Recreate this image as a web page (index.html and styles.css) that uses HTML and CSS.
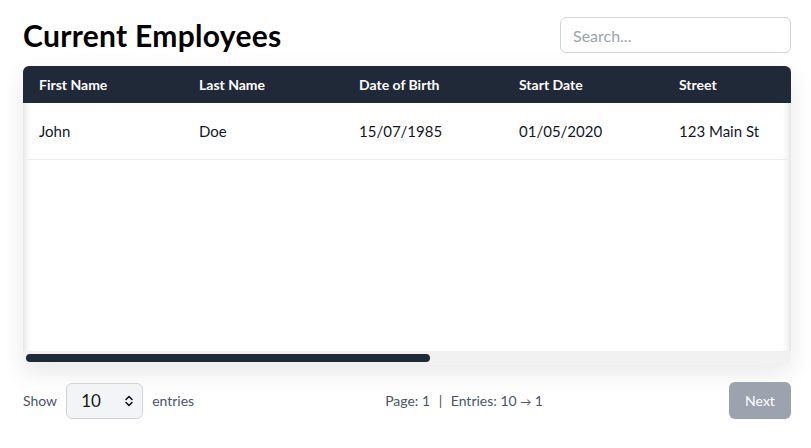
FILE: index.html
```html
<!DOCTYPE html>
<html lang="en">
<head>
<meta charset="utf-8">
<title>Current Employees</title>
<link rel="stylesheet" href="styles.css">
</head>
<body>
<main class="page">
  <header class="top">
    <h1 class="title">Current Employees</h1>
    <input class="search" type="text" placeholder="Search...">
  </header>
  <section class="card">
    <div class="scroller">
      <div class="thead">
        <div class="cell">First Name</div>
        <div class="cell">Last Name</div>
        <div class="cell">Date of Birth</div>
        <div class="cell">Start Date</div>
        <div class="cell">Street</div>
      </div>
      <div class="tbody">
        <div class="row">
          <div class="cell">John</div>
          <div class="cell">Doe</div>
          <div class="cell">15/07/1985</div>
          <div class="cell">01/05/2020</div>
          <div class="cell">123 Main St</div>
        </div>
      </div>
    </div>
    <div class="track"><div class="thumb"></div></div>
  </section>
  <footer class="bottom">
    <div class="show">
      <span>Show</span>
      <div class="select">
        <span class="select-value">10</span>
        <svg class="chev" width="10" height="14" viewBox="0 0 10 14" aria-hidden="true"><path d="M2 5.5 L5 2.5 L8 5.5 M2 8.5 L5 11.5 L8 8.5" fill="none" stroke="#111827" stroke-width="1.6" stroke-linecap="round" stroke-linejoin="round"/></svg>
      </div>
      <span>entries</span>
    </div>
    <div class="info">Page: 1 <span class="sep">|</span> Entries: 10 <span class="arrow">→</span> 1</div>
    <button class="next" type="button">Next</button>
  </footer>
</main>
</body>
</html>
```

FILE: styles.css
```css
* { box-sizing: border-box; }
html, body { margin: 0; background: #ffffff; }
body {
  font-family: Lato, "Noto Sans", sans-serif;
  color: #111827;
  overflow: hidden;
}
.page {
  padding: 17px 20px 0 23px;
  width: 811px;
}
.top {
  display: flex;
  align-items: center;
  justify-content: space-between;
  height: 36px;
  margin-bottom: 13px;
}
.title {
  margin: 0;
  font-size: 30px;
  font-weight: 700;
  letter-spacing: 0.3px;
  line-height: 36px;
  color: #000;
}
.search {
  width: 231px;
  height: 36px;
  border: 1px solid #d1d5db;
  border-radius: 6px;
  padding: 0 12px;
  font-family: inherit;
  font-size: 16px;
  color: #111827;
  outline: none;
}
.search::placeholder { color: #9ca3af; }
.card {
  width: 768px;
  border-radius: 6px;
  overflow: hidden;
  box-shadow: 0 8px 24px rgba(0, 0, 0, 0.09);
  background: #fff;
}
.scroller {
  overflow: hidden;
  height: 285px;
  display: flex;
  flex-direction: column;
}
.thead, .row {
  display: flex;
  width: 768px;
}
.thead {
  background: #1f2937;
  color: #fff;
  height: 37px;
  align-items: center;
  font-size: 14px;
  font-weight: 700;
}
.cell {
  width: 160px;
  flex: none;
  padding-left: 16px;
  white-space: nowrap;
}
.cell:last-child { width: 128px; }
.tbody {
  flex: 1;
  box-shadow: inset 9px 0 8px -8px rgba(0, 0, 0, 0.16), inset -9px 0 8px -8px rgba(0, 0, 0, 0.16);
}
.row {
  height: 57px;
  align-items: center;
  font-size: 15px;
  border-bottom: 1px solid #eeeeee;
}
.track {
  height: 14px;
  background: #f1f1f1;
  padding: 3px 361px 3px 3px;
  border-radius: 0 0 6px 6px;
}
.thumb {
  height: 8px;
  background: #1f2937;
  border-radius: 4px;
}
.bottom {
  display: flex;
  align-items: center;
  justify-content: space-between;
  width: 768px;
  margin-top: 17px;
  height: 37px;
  font-size: 14px;
  color: #4b5563;
}
.show {
  display: flex;
  align-items: center;
  gap: 9px;
}
.select {
  width: 77px;
  height: 36px;
  background: #f3f4f6;
  border: 1px solid #d1d5db;
  border-radius: 6px;
  display: flex;
  align-items: center;
  justify-content: space-between;
  padding: 0 8px 0 14px;
  color: #111827;
  font-size: 17px;
}
.chev { display: block; }
.info {
  margin-left: 191px;
  flex: 1;
}
.sep { margin: 0 5px; }
.arrow { font-size: 11px; }
.next {
  width: 62px;
  height: 37px;
  border: 0;
  border-radius: 6px;
  background: #9ca3af;
  color: #ffffff;
  font-family: inherit;
  font-size: 14px;
  padding: 0;
}
```
